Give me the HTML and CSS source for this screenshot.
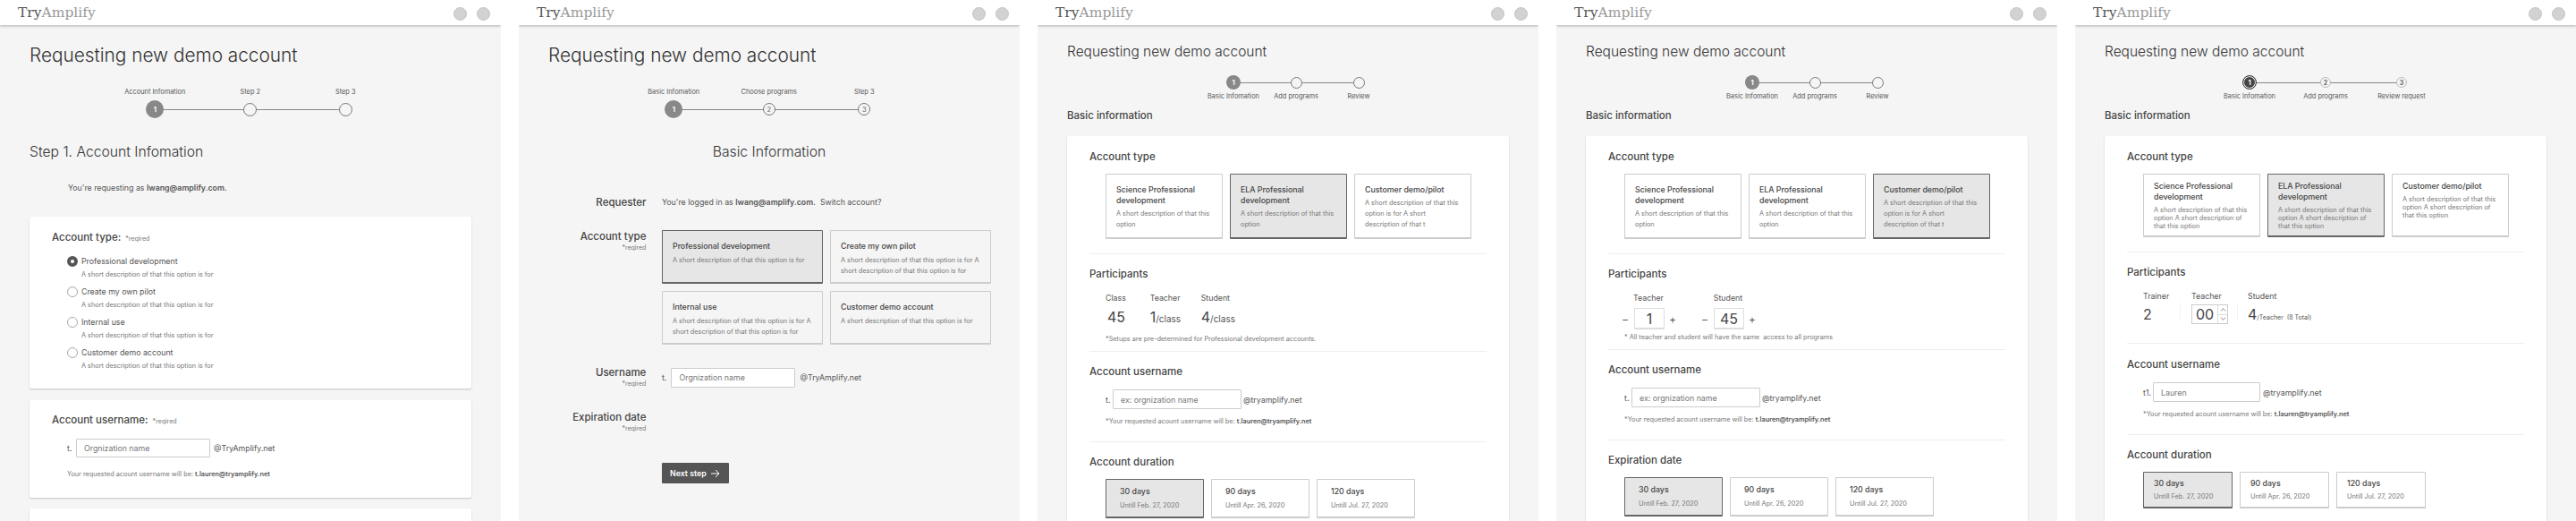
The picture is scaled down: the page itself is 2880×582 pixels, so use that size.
FILE: index.html
```html
<!DOCTYPE html>
<html lang="en">

<head>
    <meta charset="UTF-8">
    <meta name="viewport" content="width=device-width, initial-scale=1.0">
    <title>Requesting new demo account</title>
    <link rel="stylesheet" href="styles.css">
</head>
<body>
    <div class="board">

        <!-- version 1 -->
        <section class="frame">
            <header class="topbar">
                <span class="logo">Try<span class="logo-light">Amplify</span></span>
                <div class="topbar-icons"><i></i><i></i></div>
            </header>
            <main class="content">
                <h1 class="title">Requesting new demo account</h1>
                <div class="steps steps-top steps-large">
                    <div class="step"><span class="step-label">Account Infomation</span><div class="step-track"><span class="dot dot-active">1</span></div></div>
                    <div class="step"><span class="step-label">Step 2</span><div class="step-track"><span class="dot"></span></div></div>
                    <div class="step"><span class="step-label">Step 3</span><div class="step-track"><span class="dot"></span></div></div>
                </div>
                <h2 class="step-title">Step 1. Account Infomation</h2>
                <p class="requesting">You're requesting as <strong>lwang@amplify.com.</strong></p>

                <div class="card card-type">
                    <h3 class="card-head">Account type: <small>*reqired</small></h3>
                    <div class="radio-list">
                        <div class="radio-item">
                            <span class="radio radio-on"></span><span class="radio-name">Professional development</span>
                            <span class="radio-desc">A short description of that this option is for</span>
                        </div>
                        <div class="radio-item">
                            <span class="radio"></span><span class="radio-name">Create my own pilot</span>
                            <span class="radio-desc">A short description of that this option is for</span>
                        </div>
                        <div class="radio-item">
                            <span class="radio"></span><span class="radio-name">Internal use</span>
                            <span class="radio-desc">A short description of that this option is for</span>
                        </div>
                        <div class="radio-item">
                            <span class="radio"></span><span class="radio-name">Customer demo account</span>
                            <span class="radio-desc">A short description of that this option is for</span>
                        </div>
                    </div>
                </div>

                <div class="card card-user">
                    <h3 class="card-head">Account username: <small>*reqired</small></h3>
                    <div class="user-row user-row-a">
                        <span>t.</span><input type="text" placeholder="Orgnization name"><span>@TryAmplify.net</span>
                    </div>
                    <p class="note note-user">Your requested acount username will be: <strong>t.lauren@tryamplify.net</strong></p>
                </div>

                <div class="card card-rest"></div>
            </main>
        </section>

        <!-- version 2 -->
        <section class="frame">
            <header class="topbar">
                <span class="logo">Try<span class="logo-light">Amplify</span></span>
                <div class="topbar-icons"><i></i><i></i></div>
            </header>
            <main class="content">
                <h1 class="title">Requesting new demo account</h1>
                <div class="steps steps-top steps-large">
                    <div class="step"><span class="step-label">Basic Infomation</span><div class="step-track"><span class="dot dot-active">1</span></div></div>
                    <div class="step"><span class="step-label">Choose programs</span><div class="step-track"><span class="dot dot-num">2</span></div></div>
                    <div class="step"><span class="step-label">Step 3</span><div class="step-track"><span class="dot dot-num">3</span></div></div>
                </div>
                <h2 class="step-title step-title-center">Basic Information</h2>

                <div class="form-row form-row-first">
                    <div class="form-label">Requester</div>
                    <p class="form-text">You're logged in as <strong>lwang@amplify.com.</strong>&nbsp; Switch account?</p>
                </div>
                <div class="form-row">
                    <div class="form-label">Account type<small>*reqired</small></div>
                    <div class="type-grid">
                        <div class="option option-on">
                            <h4>Professional development</h4>
                            <p>A short description of that this option is for</p>
                        </div>
                        <div class="option">
                            <h4>Create my own pilot</h4>
                            <p>A short description of that this option is for A short description of that this option is for</p>
                        </div>
                        <div class="option">
                            <h4>Internal use</h4>
                            <p>A short description of that this option is for A short description of that this option is for</p>
                        </div>
                        <div class="option">
                            <h4>Customer demo account</h4>
                            <p>A short description of that this option is for</p>
                        </div>
                    </div>
                </div>
                <div class="form-row">
                    <div class="form-label">Username<small>*reqired</small></div>
                    <div class="user-row user-row-b">
                        <span>t.</span><input type="text" placeholder="Orgnization name"><span>@TryAmplify.net</span>
                    </div>
                </div>
                <div class="form-row form-row-date">
                    <div class="form-label">Expiration date<small>*reqired</small></div>
                </div>
                <button class="next-btn" type="button">Next step
                    <svg width="11" height="10" viewBox="0 0 11 10" fill="none" stroke="#fff" stroke-width="1"><path d="M1 5h9M6 1l4 4-4 4"/></svg>
                </button>
            </main>
        </section>

        <!-- version 3 -->
        <section class="frame">
            <header class="topbar">
                <span class="logo">Try<span class="logo-light">Amplify</span></span>
                <div class="topbar-icons"><i></i><i></i></div>
            </header>
            <main class="content">
                <h1 class="title title-small">Requesting new demo account</h1>
                <div class="steps steps-bottom steps-narrow">
                    <div class="step"><div class="step-track"><span class="dot dot-active">1</span></div><span class="step-label">Basic Infomation</span></div>
                    <div class="step"><div class="step-track"><span class="dot"></span></div><span class="step-label">Add programs</span></div>
                    <div class="step"><div class="step-track"><span class="dot"></span></div><span class="step-label">Review</span></div>
                </div>
                <h2 class="page-head">Basic information</h2>
                <div class="card card-long">
                    <div class="section">
                        <h3 class="section-head">Account type</h3>
                        <div class="option-row">
                            <div class="option"><h4>Science Professional development</h4><p>A short description of that this option</p></div>
                            <div class="option option-on"><h4>ELA Professional development</h4><p>A short description of that this option</p></div>
                            <div class="option"><h4>Customer demo/pilot</h4><p>A short description of that this option is for A short<br>description of that t</p></div>
                        </div>
                    </div>
                    <div class="section section-tight">
                        <h3 class="section-head">Participants</h3>
                        <div class="tally">
                            <div class="tally-col tally-class"><span class="tally-label">Class</span><span class="tally-value tally-indent">45</span></div>
                            <div class="tally-col tally-teacher"><span class="tally-label">Teacher</span><span class="tally-value">1<small>/class</small></span></div>
                            <div class="tally-col"><span class="tally-label">Student</span><span class="tally-value">4<small>/class</small></span></div>
                        </div>
                        <p class="note note-part">*Setups are pre-determined for Professional development accounts.</p>
                    </div>
                    <div class="section section-user">
                        <h3 class="section-head">Account username</h3>
                        <div class="user-row user-row-c">
                            <span>t.</span><input type="text" placeholder="ex: orgnization name"><span>@tryamplify.net</span>
                        </div>
                        <p class="note note-user">*Your requested acount username will be: <strong>t.lauren@tryamplify.net</strong></p>
                    </div>
                    <div class="section section-last">
                        <h3 class="section-head">Account duration</h3>
                        <div class="duration-row">
                            <div class="duration duration-on"><h4>30 days</h4><p>Untill Feb. 27, 2020</p></div>
                            <div class="duration"><h4>90 days</h4><p>Untill Apr. 26, 2020</p></div>
                            <div class="duration"><h4>120 days</h4><p>Untill Jul. 27, 2020</p></div>
                        </div>
                    </div>
                </div>
            </main>
        </section>

        <!-- version 4 -->
        <section class="frame">
            <header class="topbar">
                <span class="logo">Try<span class="logo-light">Amplify</span></span>
                <div class="topbar-icons"><i></i><i></i></div>
            </header>
            <main class="content">
                <h1 class="title title-small">Requesting new demo account</h1>
                <div class="steps steps-bottom steps-narrow">
                    <div class="step"><div class="step-track"><span class="dot dot-active">1</span></div><span class="step-label">Basic Infomation</span></div>
                    <div class="step"><div class="step-track"><span class="dot"></span></div><span class="step-label">Add programs</span></div>
                    <div class="step"><div class="step-track"><span class="dot"></span></div><span class="step-label">Review</span></div>
                </div>
                <h2 class="page-head">Basic information</h2>
                <div class="card card-long">
                    <div class="section">
                        <h3 class="section-head">Account type</h3>
                        <div class="option-row">
                            <div class="option"><h4>Science Professional development</h4><p>A short description of that this option</p></div>
                            <div class="option"><h4>ELA Professional development</h4><p>A short description of that this option</p></div>
                            <div class="option option-on"><h4>Customer demo/pilot</h4><p>A short description of that this option is for A short<br>description of that t</p></div>
                        </div>
                    </div>
                    <div class="section section-tight">
                        <h3 class="section-head">Participants</h3>
                        <div class="counters">
                            <div class="counter">
                                <span class="counter-label">Teacher</span>
                                <span class="counter-sign">−</span><span class="counter-box">1</span><span class="counter-sign">+</span>
                            </div>
                            <div class="counter">
                                <span class="counter-label">Student</span>
                                <span class="counter-sign">−</span><span class="counter-box">45</span><span class="counter-sign">+</span>
                            </div>
                        </div>
                        <p class="note note-counter">* All teacher and student will have the same&nbsp; access to all programs</p>
                    </div>
                    <div class="section section-user">
                        <h3 class="section-head">Account username</h3>
                        <div class="user-row user-row-c">
                            <span>t.</span><input type="text" placeholder="ex: orgnization name"><span>@tryamplify.net</span>
                        </div>
                        <p class="note note-user">*Your requested acount username will be: <strong>t.lauren@tryamplify.net</strong></p>
                    </div>
                    <div class="section section-last">
                        <h3 class="section-head">Expiration date</h3>
                        <div class="duration-row">
                            <div class="duration duration-on"><h4>30 days</h4><p>Untill Feb. 27, 2020</p></div>
                            <div class="duration"><h4>90 days</h4><p>Untill Apr. 26, 2020</p></div>
                            <div class="duration"><h4>120 days</h4><p>Untill Jul. 27, 2020</p></div>
                        </div>
                    </div>
                </div>
            </main>
        </section>

        <!-- version 5 -->
        <section class="frame frame-last">
            <header class="topbar">
                <span class="logo">Try<span class="logo-light">Amplify</span></span>
                <div class="topbar-icons"><i></i><i></i></div>
            </header>
            <main class="content">
                <h1 class="title title-small">Requesting new demo account</h1>
                <div class="steps steps-bottom steps-mid">
                    <div class="step"><div class="step-track"><span class="dot dot-ring">1</span></div><span class="step-label">Basic Infomation</span></div>
                    <div class="step"><div class="step-track"><span class="dot dot-num">2</span></div><span class="step-label">Add programs</span></div>
                    <div class="step"><div class="step-track"><span class="dot dot-num">3</span></div><span class="step-label">Review request</span></div>
                </div>
                <h2 class="page-head">Basic information</h2>
                <div class="card card-long">
                    <div class="section section-dense">
                        <h3 class="section-head">Account type</h3>
                        <div class="option-row">
                            <div class="option"><h4>Science Professional development</h4><p>A short description of that this option A short description of that this option</p></div>
                            <div class="option option-on"><h4>ELA Professional development</h4><p>A short description of that this option A short description of that this option</p></div>
                            <div class="option"><h4>Customer demo/pilot</h4><p>A short description of that this option A short description of that this option</p></div>
                        </div>
                    </div>
                    <div class="section section-trainer">
                        <h3 class="section-head">Participants</h3>
                        <div class="tally">
                            <div class="tally-col tally-trainer"><span class="tally-label">Trainer</span><span class="tally-value">2</span></div>
                            <span class="tally-rule"></span>
                            <div class="tally-col tally-spin">
                                <span class="tally-label">Teacher</span>
                                <div class="spin">
                                    <span class="spin-num">00</span>
                                    <div class="spin-arrows">
                                        <span><svg width="7" height="4" viewBox="0 0 7 4" fill="none" stroke="#777" stroke-width="0.8"><path d="M1 3.5l2.5-3 2.5 3"/></svg></span>
                                        <span><svg width="7" height="4" viewBox="0 0 7 4" fill="none" stroke="#777" stroke-width="0.8"><path d="M1 .5l2.5 3 2.5-3"/></svg></span>
                                    </div>
                                </div>
                            </div>
                            <span class="tally-rule"></span>
                            <div class="tally-col tally-student"><span class="tally-label">Student</span><span class="tally-value">4<small class="tally-fine">/Teacher &nbsp;(8 Total)</small></span></div>
                        </div>
                    </div>
                    <div class="section section-user section-user-d">
                        <h3 class="section-head">Account username</h3>
                        <div class="user-row user-row-d">
                            <span>t1.</span><input type="text" placeholder="Lauren"><span>@tryamplify.net</span>
                        </div>
                        <p class="note note-user">*Your requested acount username will be: <strong>t.lauren@tryamplify.net</strong></p>
                    </div>
                    <div class="section section-last">
                        <h3 class="section-head">Account duration</h3>
                        <div class="duration-row duration-row-small">
                            <div class="duration duration-on"><h4>30 days</h4><p>Untill Feb. 27, 2020</p></div>
                            <div class="duration"><h4>90 days</h4><p>Untill Apr. 26, 2020</p></div>
                            <div class="duration"><h4>120 days</h4><p>Untill Jul. 27, 2020</p></div>
                        </div>
                    </div>
                </div>
            </main>
        </section>

    </div>
</body>
</html>
```

FILE: styles.css
```css
* {
    box-sizing: border-box;
}

html,
body {
    margin: 0;
    padding: 0;
    height: 582px;
    overflow: hidden;
    background-color: white;
}

body {
    font-family: Inter, "Liberation Sans", sans-serif;
    color: #555;
}

h1, h2, h3, h4, p {
    margin: 0;
    font-weight: normal;
}

strong {
    font-weight: 600;
}

.board {
    display: flex;
    gap: 20px;
    width: 2880px;
    height: 582px;
}

.frame {
    width: 560px;
    height: 582px;
    overflow: hidden;
    background-color: #f5f5f5;
}

/* top bar */
.topbar {
    position: relative;
    display: flex;
    align-items: center;
    justify-content: space-between;
    height: 28px;
    padding: 0 12px 0 20px;
    background-color: white;
    box-shadow: 0 1px 3px rgba(0, 0, 0, 0.3);
}

.logo {
    font-family: "DejaVu Serif", serif;
    font-size: 15.5px;
    line-height: 28px;
    color: #555;
}

.logo-light {
    color: #999;
}

.topbar-icons {
    display: flex;
    gap: 11px;
    padding-top: 3px;
}

.topbar-icons i {
    width: 15px;
    height: 15px;
    border-radius: 50%;
    background-color: #d2d2d2;
    border: 1px solid #c4c4c4;
}

/* page */
.content {
    padding: 0 33px;
}

.title {
    margin-top: 19px;
    font-size: 20.8px;
    font-weight: 300;
    line-height: 30px;
    color: #333;
}

.title-small {
    margin-top: 18px;
    font-size: 15.5px;
    line-height: 24px;
}

.step-title {
    margin-top: 28px;
    font-size: 15.7px;
    font-weight: 300;
    line-height: 20px;
    color: #333;
}

.step-title-center {
    text-align: center;
}

.requesting {
    margin: 24px 0 0 43px;
    font-size: 8.8px;
    line-height: 12px;
}

.page-head {
    margin-top: 9px;
    font-size: 11.5px;
    font-weight: 500;
    line-height: 14px;
    color: #444;
}

/* stepper */
.steps {
    display: flex;
}

.step {
    display: flex;
    flex-direction: column;
    align-items: center;
}

.step-label {
    font-size: 7.4px;
    line-height: 10px;
    white-space: nowrap;
}

.step-track {
    position: relative;
    display: flex;
    align-items: center;
    justify-content: center;
    width: 100%;
}

.step:not(:last-child) .step-track::after {
    content: "";
    position: absolute;
    top: 50%;
    left: 50%;
    width: 100%;
    height: 1px;
    background-color: #888;
}

.dot {
    position: relative;
    z-index: 1;
    display: flex;
    align-items: center;
    justify-content: center;
    width: 15px;
    height: 15px;
    border: 1px solid #777;
    border-radius: 50%;
    background-color: #f5f5f5;
    font-size: 7.5px;
    color: #666;
}

.dot-active {
    width: 20px;
    height: 20px;
    border: none;
    background-color: #888;
    color: white;
    font-weight: 700;
}

.dot-num {
    width: 14px;
    height: 14px;
}

.steps-large {
    margin: 21px 0 0 87px;
}

.steps-large .step {
    width: 106.5px;
}

.steps-large .step-track {
    height: 20px;
    margin-top: 4px;
}

.steps-narrow {
    margin: 14px 0 0 151px;
}

.steps-narrow .step {
    width: 70px;
}

.steps-narrow .step-track {
    height: 16px;
    margin-bottom: 3px;
}

.steps-narrow .dot {
    width: 13px;
    height: 13px;
}

.steps-narrow .dot-active {
    width: 16px;
    height: 16px;
}

.steps-mid {
    margin: 14px 0 0 119.5px;
}

.steps-mid .step {
    width: 85px;
}

.steps-mid .step-track {
    height: 16px;
    margin-bottom: 3px;
}

.steps-mid .step-track::after {
    background-color: #aaa;
}

.steps-mid .dot-num {
    width: 12px;
    height: 12px;
    border-color: #bbb;
    font-size: 7px;
    font-weight: 700;
}

.dot-ring {
    width: 16px;
    height: 16px;
    border: 1px solid #444;
    background-color: #444;
    box-shadow: inset 0 0 0 1px #f5f5f5;
    color: white;
    font-size: 7.5px;
    font-weight: 700;
}

/* cards */
.card {
    border-radius: 2px;
    background-color: white;
    box-shadow: 0 1px 2px rgba(0, 0, 0, 0.2);
}

.card-type {
    margin-top: 26px;
    padding: 16px 25px 20px;
}

.card-user {
    margin-top: 13px;
    padding: 15px 25px 21px;
}

.card-rest {
    margin-top: 12px;
    height: 40px;
}

.card-long {
    margin-top: 16px;
    padding: 1px 25px 0;
    height: 460px;
}

.card-head {
    font-size: 11.5px;
    font-weight: 500;
    line-height: 14px;
    color: #444;
}

.card-head small {
    margin-left: 2px;
    font-size: 7px;
    font-weight: normal;
    color: #777;
}

/* radios */
.radio-list {
    display: flex;
    flex-direction: column;
    gap: 8px;
    margin: 12px 0 0 17px;
}

.radio-item {
    display: grid;
    grid-template-columns: 16px auto;
    justify-content: start;
    row-gap: 4px;
}

.radio {
    width: 12px;
    height: 12px;
    border: 1px solid #aaa;
    border-radius: 50%;
    background-color: white;
}

.radio-on {
    border: 4px solid #555;
}

.radio-name {
    font-size: 8.8px;
    line-height: 12px;
}

.radio-desc {
    grid-column: 2;
    font-size: 7.3px;
    line-height: 10px;
    color: #777;
}

/* username rows */
.user-row {
    display: flex;
    align-items: center;
    font-size: 8.8px;
    color: #555;
}

.user-row input {
    height: 22px;
    padding: 0 8px;
    border: 1px solid #ccc;
    border-radius: 1px;
    background-color: white;
    font-family: inherit;
    font-size: 8.8px;
}

.user-row input::placeholder {
    color: #777;
}

.user-row-a {
    margin: 12px 0 0 17px;
}

.user-row-a span:first-child {
    width: 10px;
}

.user-row-a input {
    width: 150px;
    height: 21px;
    margin-right: 4px;
}

.user-row-b span:first-child {
    width: 10.5px;
}

.user-row-b input {
    width: 139px;
    margin-right: 5px;
}

.user-row-c {
    margin: 13px 0 0 18px;
}

.user-row-c span:first-child {
    width: 8px;
}

.user-row-c input {
    width: 144px;
    margin-right: 2px;
}

.user-row-d {
    margin: 13px 0 0 18px;
}

.user-row-d span:first-child {
    width: 11px;
}

.user-row-d input {
    width: 120px;
    margin-right: 3px;
}

.note {
    font-size: 7.3px;
    line-height: 10px;
    color: #777;
}

.note strong {
    color: #555;
}

.note-user {
    margin: 9px 0 0 18px;
}

.card-user .note-user {
    margin: 14px 0 0 17px;
}

/* labelled form rows */
.form-row {
    display: grid;
    grid-template-columns: 109.4px auto;
    justify-content: start;
    column-gap: 17.6px;
    margin-top: 24px;
}

.form-row-first {
    margin-top: 39px;
}

.form-row-date {
    margin-top: 25px;
}

.form-label {
    font-size: 11.5px;
    font-weight: 500;
    line-height: 14px;
    text-align: right;
    color: #444;
}

.form-label small {
    display: block;
    margin-top: 1px;
    font-size: 7px;
    font-weight: normal;
    line-height: 10px;
    color: #777;
}

.form-text {
    font-size: 8.8px;
    line-height: 14px;
}

.type-grid {
    display: grid;
    grid-template-columns: 180px 180px;
    grid-auto-rows: 60px;
    gap: 8px;
}

.next-btn {
    display: flex;
    align-items: center;
    gap: 4px;
    width: 75px;
    height: 23px;
    margin: 33px 0 0 127px;
    padding: 0 9px;
    border: none;
    border-radius: 1px;
    background-color: #555;
    color: white;
    font-family: inherit;
    font-size: 8.8px;
    font-weight: 600;
}

/* option cards */
.option {
    padding: 11px;
    border: 1px solid #ccc;
    border-bottom-width: 2px;
    border-radius: 1px;
    background-color: white;
}

.type-grid .option {
    background-color: #f5f5f5;
}

.type-grid .option-on,
.option-on {
    border-color: #666;
    background-color: #e6e6e6;
}

.option h4 {
    font-size: 8.8px;
    font-weight: 500;
    line-height: 12px;
    color: #444;
}

.option p {
    margin-top: 4px;
    font-size: 7.3px;
    line-height: 12px;
    color: #777;
}

.option-row {
    display: flex;
    gap: 8px;
    margin: 12px 0 0 18px;
}

.option-row .option {
    width: 131px;
    height: 73px;
}

.option-row .option p {
    margin-top: 2px;
}

.section-dense .option {
    height: 71px;
    padding-top: 7px;
}

.option-row .option p {
    margin-top: 3px;
}

.section-dense .option-row .option p {
    margin-top: 4px;
    line-height: 9px;
}

/* sections inside the long card */
.section {
    padding: 15px 0 16px;
    border-bottom: 1px solid #eee;
}

.section-tight {
    padding-bottom: 8px;
}

.section-user {
    padding-bottom: 17px;
}

.section-user-d {
    padding-top: 16px;
}

.section-trainer {
    padding-bottom: 17px;
}

.section-last {
    border-bottom: none;
}

.section-head {
    font-size: 11.5px;
    font-weight: 500;
    line-height: 14px;
    color: #444;
}

/* participants */
.tally {
    display: flex;
    margin: 14px 0 0 18px;
}

.tally-col {
    display: flex;
    flex-direction: column;
}

.tally-class {
    width: 49.7px;
}

.tally-teacher {
    width: 57px;
}

.tally-label {
    font-size: 8.8px;
    line-height: 12px;
}

.tally-value {
    margin-top: 4px;
    font-size: 16px;
    line-height: 22px;
    color: #444;
}

.tally-value small {
    font-size: 10px;
    color: #555;
}

.tally-value .tally-fine {
    font-size: 7px;
}

.tally-indent {
    padding-left: 2px;
}

.tally-trainer {
    width: 41px;
}

.tally-spin {
    width: 51px;
    margin-left: 12px;
}

.tally-student {
    margin-left: 11px;
}

.tally-student .tally-value,
.tally-trainer .tally-value {
    margin-top: 3px;
}

.tally-rule {
    width: 1px;
    height: 19px;
    margin-top: 13px;
    background-color: #f2f2f2;
}

.spin {
    display: flex;
    width: 41px;
    height: 22px;
    margin-top: 3px;
    border: 1px solid #ccc;
}

.spin-num {
    flex: 1;
    font-size: 16px;
    line-height: 20px;
    text-align: center;
    color: #444;
}

.spin-arrows {
    display: flex;
    flex-direction: column;
    width: 11px;
    border-left: 1px solid #ddd;
}

.spin-arrows span {
    display: flex;
    flex: 1;
    align-items: center;
    justify-content: center;
}

.spin-arrows span:first-child {
    border-bottom: 1px solid #ddd;
}

.counters {
    display: flex;
    gap: 25px;
    margin: 14px 0 0 13px;
}

.counter {
    display: grid;
    grid-template-columns: 12px 34px 10px;
    column-gap: 4px;
    row-gap: 5px;
    align-items: center;
    text-align: center;
}

.counter-label {
    grid-column: 1 / 4;
    font-size: 8.8px;
    line-height: 12px;
}

.counter-sign {
    font-size: 12px;
}

.counter-box {
    height: 24px;
    border: 1px solid #ddd;
    border-bottom-width: 2px;
    border-radius: 1px;
    background-color: white;
    font-size: 16px;
    line-height: 22px;
    color: #444;
}

.note-part {
    margin: 7px 0 0 18px;
}

.note-counter {
    margin: 4px 0 0 18px;
}

/* duration */
.duration-row {
    display: flex;
    gap: 8px;
    margin: 12px 0 0 18px;
}

.duration {
    width: 110px;
    height: 44px;
    padding: 7px 15px;
    border: 1px solid #ccc;
    border-bottom-width: 2px;
    border-radius: 1px;
    background-color: white;
}

.duration-on {
    border-color: #666;
    background-color: #e6e6e6;
}

.duration h4 {
    font-size: 8.8px;
    font-weight: 500;
    line-height: 12px;
    color: #444;
}

.duration p {
    margin-top: 4px;
    font-size: 7.3px;
    line-height: 12px;
    color: #777;
}

.duration-row-small .duration {
    width: 100px;
    height: 41px;
    padding: 6px 11px;
}

.duration-row-small .duration p {
    margin-top: 3px;
}
```
